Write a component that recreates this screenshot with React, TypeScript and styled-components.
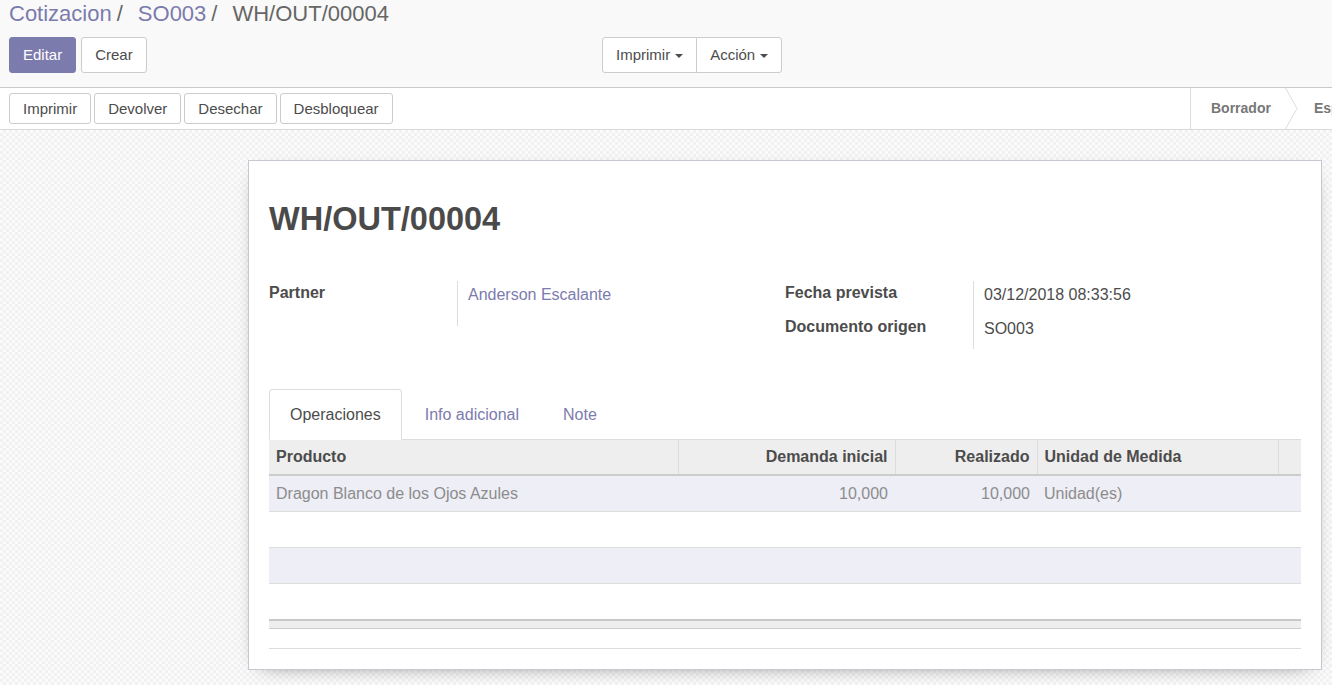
import React from "react";
import styled, { createGlobalStyle } from "styled-components";

const Global = createGlobalStyle`
  html, body { margin: 0; padding: 0; }
  body {
    font-family: "Liberation Sans", Arial, sans-serif;
    color: #4c4c4c;
    background: #fff;
  }
  * { box-sizing: border-box; }
`;

const Page = styled.div`
  width: 1332px;
  min-height: 685px;
  display: flex;
  flex-direction: column;
  overflow: hidden;
`;

const ControlPanel = styled.div`
  background: #f9f9f9;
  border-bottom: 1px solid #cacaca;
  padding: 0 9px 14px;
`;

const Breadcrumb = styled.div`
  font-size: 22px;
  line-height: 28px;
  height: 26px;
  color: #666;
  white-space: nowrap;
`;

const Crumb = styled.span<{ $link?: boolean }>`
  color: ${(p) => (p.$link ? "#7c7bad" : "#666")};
`;

const Sep = styled.span`
  margin: 0 15px 0 5px;
  color: #666;
`;

const ButtonsRow = styled.div`
  margin-top: 11px;
  display: grid;
  grid-template-columns: 593px auto;
  align-items: center;
`;

const Group = styled.div<{ $gap?: number }>`
  display: flex;
  gap: ${(p) => p.$gap ?? 0}px;
`;

const Btn = styled.button<{ $primary?: boolean; $small?: boolean; $joined?: boolean }>`
  font-family: inherit;
  font-size: 15px;
  line-height: ${(p) => (p.$small ? 19 : 20)}px;
  padding: ${(p) => (p.$small ? "5px 13px" : "7px 13px")};
  border: 1px solid ${(p) => (p.$primary ? "#7c7bad" : "#cccccc")};
  background: ${(p) => (p.$primary ? "#7c7bad" : "#ffffff")};
  color: ${(p) => (p.$primary ? "#ffffff" : "#4c4c4c")};
  border-radius: 3px;
  display: inline-flex;
  align-items: center;
  white-space: nowrap;
  cursor: pointer;
  ${(p) =>
    p.$joined
      ? `
    &:first-child { border-top-right-radius: 0; border-bottom-right-radius: 0; }
    &:not(:first-child) { margin-left: -1px; border-top-left-radius: 0; border-bottom-left-radius: 0; }
  `
      : ""}
`;

const Caret = styled.span`
  display: inline-block;
  width: 0;
  height: 0;
  margin-left: 5px;
  margin-top: 2px;
  border-top: 4px solid #4c4c4c;
  border-left: 4px solid transparent;
  border-right: 4px solid transparent;
`;

const StatusRow = styled.div`
  background: #fff;
  border-bottom: 1px solid #d9d9d9;
  display: flex;
  height: 42px;
  overflow: hidden;
`;

const StatusButtons = styled.div`
  width: 1190px;
  flex-shrink: 0;
  padding: 5px 9px;
  display: flex;
  gap: 3px;
  align-items: flex-start;
`;

const StatusBar = styled.div`
  display: flex;
  flex-shrink: 0;
  border-left: 1px solid #dddddd;
  height: 41px;
`;

const StatusItem = styled.div<{ $first?: boolean }>`
  font-size: 14px;
  font-weight: bold;
  color: #777;
  line-height: 41px;
  padding: ${(p) => (p.$first ? "0 14px 0 20px" : "0 14px 0 16px")};
  white-space: nowrap;
`;

const Chevron = styled.svg`
  display: block;
  flex-shrink: 0;
`;

const SheetBg = styled.div`
  flex: 1;
  background-color: #f8f8f8;
  background-image: repeating-conic-gradient(#f1f1f1 0 25%, #fbfbfb 0 50%);
  background-size: 6px 6px;
  padding: 30px 10px 16px 248px;
`;

const Sheet = styled.div`
  width: 1074px;
  background: #fff;
  border: 1px solid #c8c8d3;
  box-shadow: 0 5px 20px -15px #000;
  padding: 39px 20px 20px;
`;

const Title = styled.h1`
  margin: 0;
  font-size: 32.5px;
  line-height: 39px;
  font-weight: bold;
  color: #4a4a4a;
`;

const Groups = styled.div`
  margin-top: 42px;
  display: grid;
  grid-template-columns: 516px 516px;
  align-items: start;
`;

const FieldGrid = styled.div`
  display: grid;
  grid-template-columns: 188px 1fr;
`;

const Label = styled.div`
  font-size: 16px;
  line-height: 22px;
  font-weight: bold;
  color: #4c4c4c;
  padding: 1px 0 11px;
`;

const Value = styled.div<{ $link?: boolean; $tall?: boolean }>`
  font-size: 16px;
  line-height: 22px;
  color: ${(p) => (p.$link ? "#7c7bad" : "#4c4c4c")};
  border-left: 1px solid #dddddd;
  padding: 3px 0 0 10px;
  min-height: ${(p) => (p.$tall ? 45 : 34)}px;
`;

const Tabs = styled.div`
  margin-top: 40px;
  display: flex;
  gap: 2px;
  border-bottom: 1px solid #dddddd;
`;

const Tab = styled.div<{ $active?: boolean }>`
  font-size: 16px;
  line-height: 22px;
  padding: 14px 20px 13px;
  border: 1px solid ${(p) => (p.$active ? "#dddddd" : "transparent")};
  border-bottom-color: transparent;
  border-radius: 4px 4px 0 0;
  background: ${(p) => (p.$active ? "#fff" : "transparent")};
  color: ${(p) => (p.$active ? "#4c4c4c" : "#7c7bad")};
  margin-bottom: -1px;
`;

const Table = styled.table`
  width: 1032px;
  border-collapse: collapse;
  table-layout: fixed;
  font-size: 16px;
`;

const Th = styled.th<{ $right?: boolean }>`
  background: #eeeeee;
  font-weight: bold;
  color: #4c4c4c;
  line-height: 22px;
  padding: 6px 7px;
  text-align: ${(p) => (p.$right ? "right" : "left")};
  border-bottom: 2px solid #cccccc;
  border-left: 1px solid #dddddd;
  white-space: nowrap;
  &:first-child { border-left: none; }
`;

const Tr = styled.tr<{ $odd?: boolean }>`
  background: ${(p) => (p.$odd ? "#eeeef6" : "#ffffff")};
  border-bottom: 1px solid #dddddd;
  &:last-child { border-bottom: none; }
`;

const Td = styled.td<{ $right?: boolean }>`
  color: #8c8c8c;
  line-height: 23px;
  height: 36px;
  padding: 6px 7px;
  text-align: ${(p) => (p.$right ? "right" : "left")};
  white-space: nowrap;
`;

const FootCell = styled.td`
  background: #eeeeee;
  height: 9px;
  padding: 0;
  border-top: 2px solid #c8c8c8;
  border-bottom: 1px solid #cccccc;
`;

const Pager = styled.div`
  height: 20px;
  border-bottom: 1px solid #dddddd;
`;

const rows = [
  { product: "Dragon Blanco de los Ojos Azules", demand: "10,000", done: "10,000", uom: "Unidad(es)" },
  null,
  null,
  null,
];

export default function App() {
  return (
    <>
      <Global />
      <Page>
        <ControlPanel>
          <Breadcrumb>
            <Crumb $link>Cotizacion</Crumb>
            <Sep>/</Sep>
            <Crumb $link>SO003</Crumb>
            <Sep>/</Sep>
            <Crumb>WH/OUT/00004</Crumb>
          </Breadcrumb>
          <ButtonsRow>
            <Group $gap={5}>
              <Btn $primary>Editar</Btn>
              <Btn>Crear</Btn>
            </Group>
            <Group>
              <Btn $joined>
                Imprimir
                <Caret />
              </Btn>
              <Btn $joined>
                Acción
                <Caret />
              </Btn>
            </Group>
          </ButtonsRow>
        </ControlPanel>

        <StatusRow>
          <StatusButtons>
            <Btn $small>Imprimir</Btn>
            <Btn $small>Devolver</Btn>
            <Btn $small>Desechar</Btn>
            <Btn $small>Desbloquear</Btn>
          </StatusButtons>
          <StatusBar>
            <StatusItem $first>Borrador</StatusItem>
            <Chevron width="13" height="41" viewBox="0 0 13 41">
              <path d="M0.5 0 L12 20.5 L0.5 41" fill="none" stroke="#dddddd" strokeWidth="1" />
            </Chevron>
            <StatusItem>Esperando</StatusItem>
          </StatusBar>
        </StatusRow>

        <SheetBg>
          <Sheet>
            <Title>WH/OUT/00004</Title>
            <Groups>
              <FieldGrid>
                <Label>Partner</Label>
                <Value $link $tall>Anderson Escalante</Value>
              </FieldGrid>
              <FieldGrid>
                <Label>Fecha prevista</Label>
                <Value>03/12/2018 08:33:56</Value>
                <Label>Documento origen</Label>
                <Value>SO003</Value>
              </FieldGrid>
            </Groups>

            <Tabs>
              <Tab $active>Operaciones</Tab>
              <Tab>Info adicional</Tab>
              <Tab>Note</Tab>
            </Tabs>

            <Table>
              <colgroup>
                <col style={{ width: 409 }} />
                <col style={{ width: 217 }} />
                <col style={{ width: 142 }} />
                <col style={{ width: 241 }} />
                <col style={{ width: 23 }} />
              </colgroup>
              <thead>
                <tr>
                  <Th>Producto</Th>
                  <Th $right>Demanda inicial</Th>
                  <Th $right>Realizado</Th>
                  <Th>Unidad de Medida</Th>
                  <Th />
                </tr>
              </thead>
              <tbody>
                {rows.map((r, i) => (
                  <Tr key={i} $odd={i % 2 === 0}>
                    <Td>{r?.product ?? ""}</Td>
                    <Td $right>{r?.demand ?? ""}</Td>
                    <Td $right>{r?.done ?? ""}</Td>
                    <Td>{r?.uom ?? ""}</Td>
                    <Td />
                  </Tr>
                ))}
              </tbody>
              <tfoot>
                <tr>
                  <FootCell colSpan={5} />
                </tr>
              </tfoot>
            </Table>
            <Pager />
          </Sheet>
        </SheetBg>
      </Page>
    </>
  );
}
